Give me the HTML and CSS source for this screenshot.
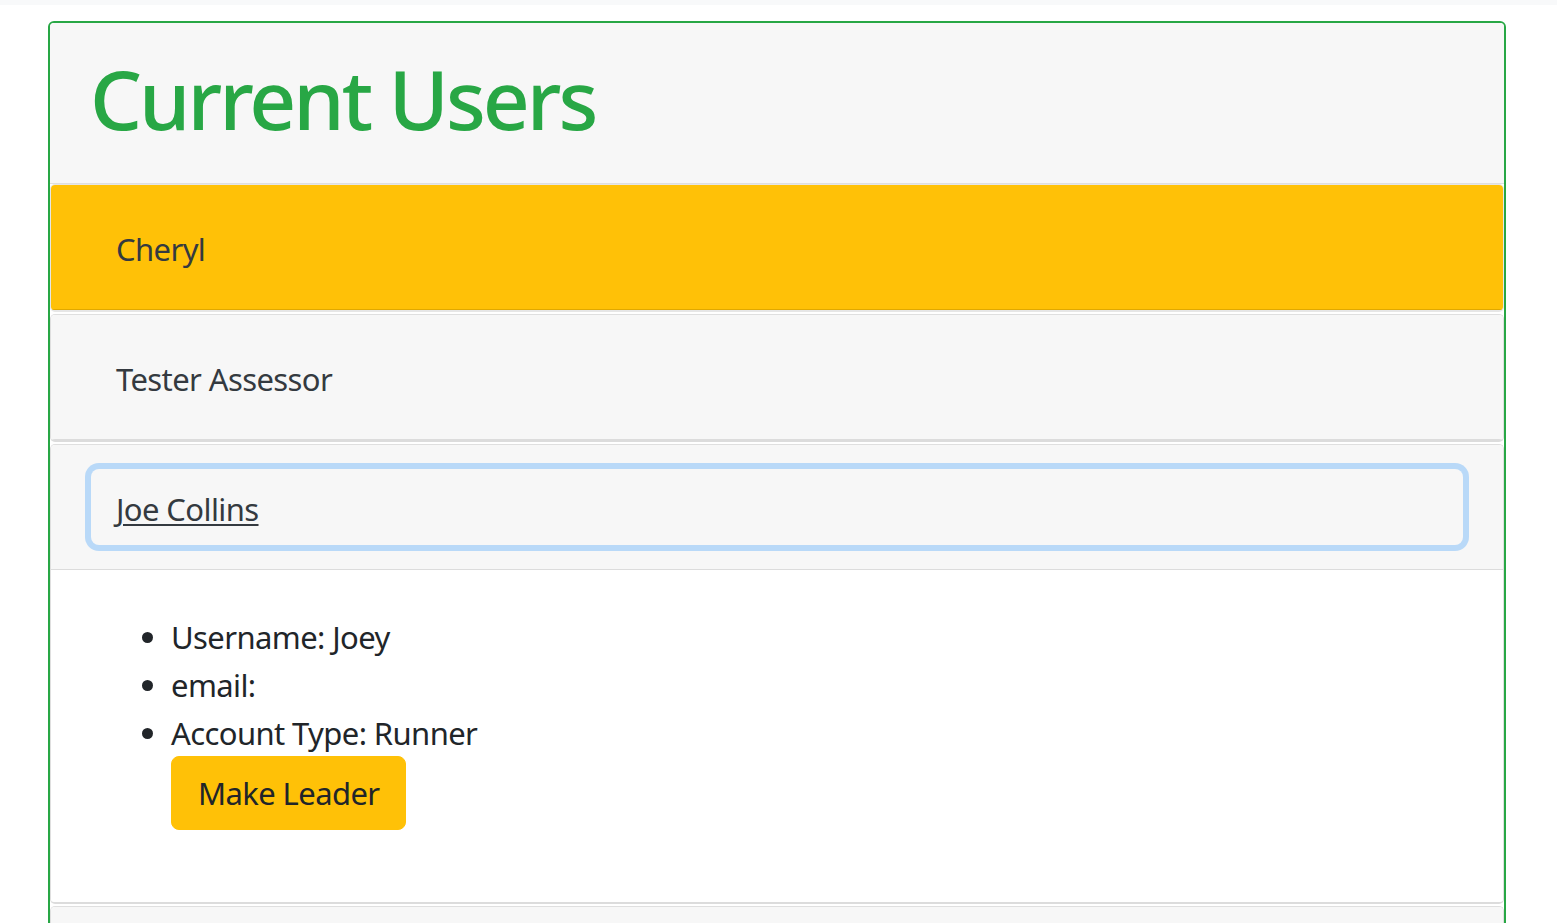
FILE: index.html
```html
<!DOCTYPE html>
<html lang="en">
<head>
<meta charset="utf-8">
<title>Current Users</title>
<link rel="stylesheet" href="styles.css">
</head>
<body>
<div class="topbar"></div>
<div class="page">
  <div class="users-card">
    <div class="users-header">
      <h1 class="title">Current Users</h1>
    </div>
    <div class="accordion">
      <div class="acc-card acc-card--leader">
        <div class="acc-header"><button class="acc-btn">Cheryl</button></div>
      </div>
      <div class="acc-card">
        <div class="acc-header"><button class="acc-btn">Tester Assessor</button></div>
      </div>
      <div class="acc-card">
        <div class="acc-header"><button class="acc-btn acc-btn--focus">Joe Collins</button></div>
        <div class="acc-body">
          <ul class="details">
            <li>Username: Joey</li>
            <li>email: </li>
            <li>Account Type: Runner</li>
          </ul>
          <div class="actions"><button class="btn-leader">Make Leader</button></div>
        </div>
      </div>
      <div class="acc-card">
        <div class="acc-header"><button class="acc-btn">&nbsp;</button></div>
      </div>
    </div>
  </div>
</div>
</body>
</html>
```

FILE: styles.css
```css
html, body {
  margin: 0;
  padding: 0;
  background: #ffffff;
}

body {
  font-family: "Noto Sans", "Open Sans", sans-serif;
  color: #212529;
}

.topbar {
  height: 5px;
  background: #f8f9fa;
}

.page {
  padding: 16px 51px 0 48px;
}

.users-card {
  border: 2px solid #28a745;
  border-radius: 6px;
  background: #ffffff;
}

.users-header {
  background: #f7f7f7;
  border-bottom: 1px solid #dfdfdf;
  border-radius: 4px 4px 0 0;
  padding: 26px 40px 36px;
}

.title {
  margin: 0;
  font-size: 82px;
  line-height: 98px;
  font-weight: 500;
  letter-spacing: -3px;
  color: #28a745;
}

.accordion {
  display: flex;
  flex-direction: column;
  gap: 2px;
}

.acc-card {
  border: 1px solid #dfdfdf;
  border-bottom: 2px solid #dcdcdc;
  border-radius: 5px;
  background: #ffffff;
  overflow: hidden;
}

.acc-header {
  padding: 24px 40px;
  background: #f7f7f7;
  border-bottom: 1px solid #dcdcdc;
}

.acc-card--leader {
  border-color: #e6e6e6;
}

.acc-card--leader .acc-header {
  background: #ffc107;
  border-bottom-color: #e0a800;
}

.acc-btn {
  display: block;
  width: 100%;
  text-align: left;
  font-family: inherit;
  font-size: 31px;
  line-height: 48px;
  letter-spacing: -0.6px;
  padding: 15px 24px 11px;
  border: 1px solid transparent;
  border-radius: 8px;
  background: transparent;
  color: #343a40;
  cursor: pointer;
}

.acc-btn--focus {
  text-decoration: underline;
  text-decoration-thickness: 2px;
  text-underline-offset: 3px;
  box-shadow: 0 0 0 6px #b9d9f8;
}

.acc-body {
  padding: 40px 40px 40px;
  background: #ffffff;
}

.details {
  margin: 0;
  padding: 3px 0 0 80px;
  font-size: 31px;
  line-height: 48px;
  letter-spacing: -0.6px;
}

.actions {
  padding-left: 80px;
  margin: -1px 0 32px;
}

.btn-leader {
  font-family: inherit;
  font-size: 31px;
  line-height: 48px;
  letter-spacing: -0.6px;
  padding: 12px 26px 12px 26px;
  border: 1px solid #ffc107;
  border-radius: 8px;
  background: #ffc107;
  color: #212529;
  cursor: pointer;
}
```
